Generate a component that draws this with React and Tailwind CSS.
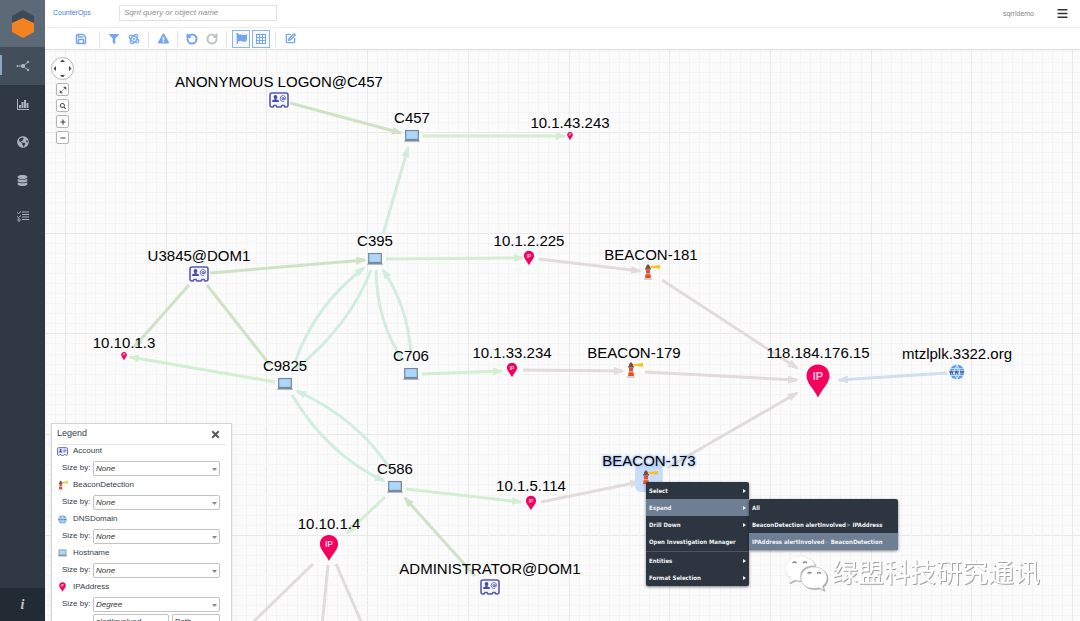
import { useState } from "react";
import { FaDatabase, FaExclamationTriangle, FaFilter, FaFlag, FaGlobeAmericas, FaMinus, FaPlus, FaSearch, FaTimes } from "react-icons/fa";
import { Menu, RotateCcw, RotateCw, Save, SquarePen } from "lucide-react";

// Node positions are icon centres on the canvas, in px
const nodes = [
  { label: "ANONYMOUS LOGON@C457", type: "account", x: 234, y: 50 },
  { label: "C457", type: "host", x: 367, y: 86 },
  { label: "10.1.43.243", type: "ip", size: "sm", x: 525, y: 86 },
  { label: "C395", type: "host", x: 330, y: 209 },
  { label: "10.1.2.225", type: "ip", size: "md", x: 484, y: 208 },
  { label: "BEACON-181", type: "beacon", x: 606, y: 222 },
  { label: "U3845@DOM1", type: "account", x: 154, y: 224 },
  { label: "10.10.1.3", type: "ip", size: "sm", x: 79, y: 306 },
  { label: "C9825", type: "host", x: 240, y: 334 },
  { label: "C706", type: "host", x: 366, y: 324 },
  { label: "10.1.33.234", type: "ip", size: "md", x: 467, y: 320 },
  { label: "BEACON-179", type: "beacon", x: 589, y: 320 },
  { label: "118.184.176.15", type: "ip", size: "xl", x: 773, y: 331 },
  { label: "mtzlplk.3322.org", type: "dns", x: 912, y: 322 },
  { label: "C586", type: "host", x: 350, y: 437 },
  { label: "10.1.5.114", type: "ip", size: "md", x: 486, y: 453 },
  { label: "BEACON-173", type: "beacon", x: 604, y: 428, selected: true },
  { label: "10.10.1.4", type: "ip", size: "lg", x: 284, y: 498 },
  { label: "ADMINISTRATOR@DOM1", type: "account", x: 445, y: 537 },
];

const labelGap = { account: 18, host: 18, beacon: 17, dns: 18, sm: 13, md: 17, lg: 24, xl: 28 };

const edges = [
  { d: "M245 53 L356 83", color: "account" },
  { d: "M377 86 L520 86", color: "ip" },
  { d: "M338 184 L363 98", color: "host" },
  { d: "M165 223 L320 210", color: "account" },
  { d: "M341 209 L478 208", color: "ip" },
  { d: "M494 209 L595 221", color: "beacon" },
  { d: "M144 235 L89 297", color: "account" },
  { d: "M162 235 L225 315", color: "account", plain: true },
  { d: "M230 332 L85 307", color: "ip" },
  { d: "M250 312 Q270 255 319 218", color: "host" },
  { d: "M326 220 Q305 275 251 319", color: "host" },
  { d: "M331 220 Q332 273 358 310", color: "host" },
  { d: "M366 305 Q363 256 338 220", color: "host" },
  { d: "M377 324 L457 321", color: "ip" },
  { d: "M478 320 L578 321", color: "beacon" },
  { d: "M600 322 L752 330", color: "beacon" },
  { d: "M617 230 L752 318", color: "beacon" },
  { d: "M902 323 L794 330", color: "dns" },
  { d: "M247 345 Q283 405 339 431", color: "host" },
  { d: "M347 422 Q315 370 252 341", color: "host" },
  { d: "M361 439 L476 452", color: "ip" },
  { d: "M496 452 L594 432", color: "beacon" },
  { d: "M622 418 L752 343", color: "beacon" },
  { d: "M340 447 L302 483", color: "ip" },
  { d: "M430 526 L360 448", color: "account" },
  { d: "M268 514 L204 576", color: "beacon", plain: true },
  { d: "M283 515 L277 576", color: "beacon", plain: true },
  { d: "M291 514 L318 576", color: "beacon", plain: true },
];

const edgeColors = {
  account: "#cfe2c6",
  host: "#d0eddf",
  ip: "#d3eed1",
  beacon: "#e1dbdb",
  dns: "#d0deee",
};

const legend = [
  { name: "Account", type: "account", value: "None" },
  { name: "BeaconDetection", type: "beacon", value: "None" },
  { name: "DNSDomain", type: "dns", value: "None" },
  { name: "Hostname", type: "host", value: "None" },
  { name: "IPAddress", type: "ip", value: "Degree" },
];

function AccountIcon({ className }) {
  return (
    <svg viewBox="0 0 20 16" className={className}>
      <path d="M3 1h14q2 0 2 2v10q0 2-2 2h-1l-1-1.500h-2L12 15H8l-1-1.500H5L4 15H3q-2 0-2-2V3q0-2 2-2z" fill="#f4f6ff" stroke="#5559b5" strokeWidth="1.600" />
      <circle cx="6.500" cy="5" r="1.900" fill="#474da8" />
      <path d="M5.600 6h1.800v1.400l2.400.8V10H3.200V8.200l2.400-.8z" fill="#474da8" />
      <circle cx="14" cy="6.700" r="1.100" fill="none" stroke="#555ab3" />
      <path d="M15.100 5.400v1.800q.3 1 1.100.3.900-2.700-.9-3.700-2.200-.8-3.700.9-1.200 2.400.6 4.200 1.400 1 3 .3" fill="none" stroke="#555ab3" strokeWidth=".8" />
    </svg>
  );
}

function HostIcon({ className }) {
  return (
    <svg viewBox="0 0 16 13" className={className}>
      <rect x="1.700" y="1" width="12.600" height="9" fill="#acd6fb" stroke="#72879b" strokeWidth="1.200" />
      <path d="M1.300 10.200h13.400l1.300 2H0z" fill="#7d8c99" />
      <path d="M0 12.200h16" stroke="#c1c7cc" strokeWidth=".8" />
    </svg>
  );
}

function BeaconIcon({ className }) {
  return (
    <svg viewBox="0 0 18 18" className={className}>
      <path d="M8 3.200l10-1.200v3.800L8 4.800z" fill="#fbc21f" />
      <path d="M4 3.200L6 1l2 2.200v2H4z" fill="#7b4b46" />
      <path d="M3 5.200h6v1.300H3z" fill="#55444b" />
      <path d="M4 6.500h4v3.500H4z" fill="#ee4d22" />
      <path d="M4 10h4v1.300H4z" fill="#c3aaa2" />
      <path d="M3.500 11.300h5l.5 4H3z" fill="#ee4d22" />
      <path d="M2 15.300h8v1.700H2z" fill="#d2d1d1" />
    </svg>
  );
}

function DnsIcon({ className }) {
  return (
    <svg viewBox="0 0 16 16" className={className}>
      <circle cx="8" cy="8" r="7.300" fill="#5b9ee8" />
      <path d="M8 1v14M1.600 4.500h12.800M1.600 11.500h12.800M8 1Q2.500 8 8 15M8 1q5.500 7 0 14" fill="none" stroke="#e5f1fd" strokeWidth=".7" />
      <rect x="0" y="6" width="16" height="4" fill="#dfebfa" />
      <path d="M.7 6.800l.9 2.400.9-2 .9 2 .9-2.400M5.900 6.800l.9 2.400.9-2 .9 2 .9-2.400M11.200 6.800l.9 2.400.9-2 .9 2 .9-2.400" fill="none" stroke="#4561ae" strokeWidth="1.100" />
    </svg>
  );
}

function PinIcon({ className }) {
  return (
    <svg viewBox="0 0 24 34" className={className}>
      <path d="M12 .5C5.500.5.500 5.500.500 12c0 7 7.500 13 11.500 21.500C16 25 23.500 19 23.500 12 23.500 5.500 18.500.5 12 .5z" fill="#f6005d" />
      <text x="12" y="16" textAnchor="middle" fontSize="11" fontFamily="Liberation Sans, sans-serif" fontWeight="bold" fill="#ffc4da">IP</text>
    </svg>
  );
}

const pinSizes = {
  sm: "w-[6px] h-[9px]",
  md: "w-[11px] h-[15px]",
  lg: "w-[19px] h-[27px]",
  xl: "w-[24px] h-[34px]",
};

function NodeIcon({ type, size }) {
  if (type === "account") return <AccountIcon className="w-5 h-4" />;
  if (type === "host") return <HostIcon className="w-4 h-[13px]" />;
  if (type === "beacon") return <BeaconIcon className="w-[18px] h-[18px]" />;
  if (type === "dns") return <DnsIcon className="w-4 h-4" />;
  return <PinIcon className={pinSizes[size]} />;
}

function LegendIcon({ type }) {
  if (type === "account") return <AccountIcon className="w-[11px] h-[9px]" />;
  if (type === "host") return <HostIcon className="w-[9px] h-[8px]" />;
  if (type === "beacon") return <BeaconIcon className="w-[11px] h-[11px]" />;
  if (type === "dns") return <DnsIcon className="w-[9px] h-[9px]" />;
  return <PinIcon className="w-[7px] h-[10px]" />;
}

function GridLines() {
  const lines = [];
  for (let i = -9; i < 240; i++) {
    const v = Math.round(i * 10.07);
    const stroke = i % 10 === 0 ? "#e8e8e9" : "#f4f4f5";
    lines.push(<path key={`v${i}`} d={`M${v + 20}.5 0V2400`} stroke={stroke} />);
    lines.push(<path key={`h${i}`} d={`M0 ${v + 82}.5H2400`} stroke={stroke} />);
  }
  return <g>{lines}</g>;
}

function Graph() {
  return (
    <>
      <svg className="absolute inset-0 w-full h-full" fill="none">
        <defs>
          {Object.entries(edgeColors).map(([name, color]) => (
            <marker key={name} id={`arrow-${name}`} viewBox="0 0 11 8" refX="9" refY="4" markerWidth="11" markerHeight="8" markerUnits="userSpaceOnUse" orient="auto">
              <path d="M0 0L11 4L0 8z" fill={color} />
            </marker>
          ))}
        </defs>
        <GridLines />
        {edges.map((e) => (
          <path key={e.d} d={e.d} stroke={edgeColors[e.color]} strokeWidth="3" markerEnd={e.plain ? undefined : `url(#arrow-${e.color})`} />
        ))}
      </svg>
      {nodes.map((n) => (
        <div key={n.label}>
          <div
            className={`absolute -translate-x-1/2 -translate-y-1/2 flex items-center justify-center ${n.selected ? "w-7 h-7 rounded-md bg-[#c8dcfb]" : ""}`}
            style={{ left: n.x, top: n.y }}
          >
            <NodeIcon type={n.type} size={n.size} />
          </div>
          <span
            className={`absolute -translate-x-1/2 -translate-y-1/2 whitespace-nowrap text-[15px] leading-[18px] text-black ${n.selected ? "[text-shadow:0_0_3px_#8fb5f5,0_0_3px_#8fb5f5]" : ""}`}
            style={{ left: n.x, top: n.y - labelGap[n.size || n.type] }}
          >
            {n.label}
          </span>
        </div>
      ))}
    </>
  );
}

function Sidebar() {
  const item = "h-[38px] w-full flex items-center justify-center text-[#aab2ba]";
  return (
    <aside className="w-[45px] shrink-0 flex flex-col bg-[#2f3843]">
      <div className="h-[47px] flex items-center justify-center bg-[#5c6977]">
        <svg viewBox="0 0 24 28" className="w-6 h-7">
          <path d="M12 0l11 6v12l-11 6L1 18V6z" fill="#3d4a57" />
          <path d="M12 8l11 5v9l-11 6L1 22v-9z" fill="#f58220" />
        </svg>
      </div>
      <button aria-label="Graph" className={`${item} relative bg-[#434e5b]`}>
        <span className="absolute left-0 top-2 w-[2px] h-5 bg-[#8ea6c5]" />
        <svg viewBox="0 0 14 12" className="w-[14px] h-3" fill="currentColor" stroke="currentColor">
          <path d="M1 6h6l5-4M7 6l5 4" fill="none" strokeWidth="1" />
          <circle cx="7" cy="6" r="1.700" />
          <circle cx="12" cy="2" r=".8" />
          <circle cx="12" cy="10" r=".8" />
          <circle cx="1.300" cy="6" r=".5" />
        </svg>
      </button>
      <button aria-label="Charts" className={item}>
        <svg viewBox="0 0 12 11" className="w-3 h-[11px]" fill="currentColor">
          <path d="M0 0h1v10h11v1H0zM2 6h2v3H2zM4.500 3h2v6h-2zM7 1h2v8H7zM9.500 4h2v5h-2z" />
        </svg>
      </button>
      <button aria-label="Geography" className={item}><FaGlobeAmericas size={12} /></button>
      <button aria-label="Data" className={item}><FaDatabase size={11} /></button>
      <button aria-label="Tasks" className="h-[34px] w-full flex items-center justify-center text-[#aab2ba]">
        <svg viewBox="0 0 12 11" className="w-3 h-[11px]" fill="none" stroke="currentColor">
          <path d="M5 1h7M5 3.500h7M5 6h7M5 8.500h7" />
          <path d="M0 1.500l1.500 1L4 .5M0 5.500l1.500 1L4 4.500" />
          <circle cx="2" cy="9" r="1.200" />
        </svg>
      </button>
      <button aria-label="Info" className="mt-auto h-[33px] flex items-center justify-center bg-[#222a33] text-[#c0c6cc]">
        <span className="font-['Liberation_Serif',serif] font-bold italic text-[14px]">i</span>
      </button>
    </aside>
  );
}

function Divider() {
  return <span className="mx-1 w-px h-4 bg-[#e0e4ea]" />;
}

function Toolbar() {
  const btn = "w-5 h-[18px] flex items-center justify-center";
  const boxed = "mx-[1px] w-[18px] h-[18px] flex items-center justify-center border border-[#8fb4f0] bg-[#f4f8ff]";
  return (
    <div className="h-[22px] pl-[26px] flex items-center bg-white border-b border-[#dcdcdc] text-[#76a4ee]">
      <button aria-label="Save" className={`${btn} mr-1`}><Save size={12} strokeWidth={3} /></button>
      <Divider />
      <button aria-label="Filter" className={btn}><FaFilter size={10} /></button>
      <button aria-label="Layout" className={btn}>
        <svg viewBox="0 0 12 12" className="w-3 h-3" fill="none" stroke="currentColor">
          <ellipse cx="6" cy="6" rx="5.500" ry="2.500" transform="rotate(35 6 6)" />
          <ellipse cx="6" cy="6" rx="5.500" ry="2.500" transform="rotate(-55 6 6)" />
          <circle cx="6" cy="6" r="3.500" />
          <circle cx="6" cy="6" r="1" />
        </svg>
      </button>
      <Divider />
      <button aria-label="Alerts" className={btn}><FaExclamationTriangle size={11} /></button>
      <Divider />
      <button aria-label="Undo" className={btn}><RotateCcw size={12} strokeWidth={4} /></button>
      <button aria-label="Redo" className={`${btn} text-[#bfc2c6]`}><RotateCw size={12} strokeWidth={4} /></button>
      <Divider />
      <button aria-label="Flags" className={boxed}><FaFlag size={11} /></button>
      <button aria-label="Grid" className={boxed}>
        <svg viewBox="0 0 12 12" className="w-3 h-3" stroke="currentColor" fill="none">
          <path d="M1.500 1v10M4.500 1v10M7.500 1v10M10.500 1v10M1 1.500h10M1 4.500h10M1 7.500h10M1 10.500h10" />
        </svg>
      </button>
      <Divider />
      <button aria-label="Edit" className={btn}><SquarePen size={11} strokeWidth={3} /></button>
    </div>
  );
}

function Header() {
  return (
    <header className="h-7 px-2 flex items-center bg-white border-b border-[#ececec]">
      <a href="#" className="w-[66px] pb-[2px] text-[7px] leading-[10px] text-[#3f80cf]">CounterOps</a>
      <input
        aria-label="Search"
        placeholder="Sqrrl query or object name"
        className="w-[158px] h-4 mb-[2px] px-1 border border-[#e2e2e2] text-[8px] italic placeholder:text-[#8d8d8d]"
      />
      <span className="ml-auto text-[7px] leading-[10px] text-[#858585]">sqrrldemo</span>
      <button aria-label="Menu" className="ml-[22px] mr-[3px] text-[#333]"><Menu size={13} strokeWidth={3} /></button>
    </header>
  );
}

function MapControls() {
  const btn = "w-[13px] h-[13px] flex items-center justify-center rounded-[2px] border border-[#b5b5b5] bg-white text-[#444]";
  return (
    <div className="absolute left-[6px] top-[7px] w-[23px] flex flex-col items-center gap-[3px]">
      <button aria-label="Pan" className="w-[23px] h-[23px] rounded-full border border-[#b9b9b9] bg-white">
        <svg viewBox="0 0 21 21" className="w-full h-full" fill="#444">
          <path d="M10.500 1.500l2.500 2.500h-5zM10.500 19.500l2.500-2.500h-5zM1.500 10.500l2.500-2.500v5zM19.500 10.500l-2.500-2.500v5z" />
        </svg>
      </button>
      <button aria-label="Fit" className={btn}>
        <svg viewBox="0 0 8 8" className="w-2 h-2" fill="#555" stroke="#555">
          <path d="M4.500 1h2.500v2.500zM1 4.500v2.500h2.500zM2 6l4-4" strokeWidth=".5" />
        </svg>
      </button>
      <button aria-label="Search area" className={btn}><FaSearch size={6} /></button>
      <button aria-label="Zoom in" className={btn}><FaPlus size={6} /></button>
      <button aria-label="Zoom out" className={btn}><FaMinus size={6} /></button>
    </div>
  );
}

function Select({ id, label, options, className }) {
  return (
    <span className={`relative flex ${className}`}>
      <select id={id} aria-label={label} className="w-full h-[15px] pl-[2px] appearance-none rounded-[2px] border border-[#c3c3c3] bg-white text-[8px] leading-[13px] text-[#333]">
        {options.map((o) => <option key={o}>{o}</option>)}
      </select>
      <svg viewBox="0 0 5 3" className="absolute right-[3px] top-[7px] w-[5px] h-[3px] pointer-events-none" fill="#888">
        <path d="M0 0h5L2.500 3z" />
      </svg>
    </span>
  );
}

function Legend({ onClose }) {
  return (
    <section className="absolute left-[6px] top-[373px] w-[181px] px-[5px] pb-2 border border-[#d5d5d5] bg-white text-[8px] text-[#333c48] shadow-sm">
      <div className="h-[21px] flex items-center justify-between border-b border-[#e4e4e4]">
        <h2 className="text-[9px]">Legend</h2>
        <button aria-label="Close legend" onClick={onClose} className="mr-[5px] text-[#555]"><FaTimes size={11} /></button>
      </div>
      {legend.map((row) => (
        <div key={row.name}>
          <div className="h-[17px] pb-[5px] flex items-center">
            <span className="w-[11px] mr-[5px] flex justify-center"><LegendIcon type={row.type} /></span>
            {row.name}
          </div>
          <div className="h-[17px] pb-[5px] flex items-center">
            <label htmlFor={row.name} className="w-9 pl-[5px] whitespace-nowrap">Size by:</label>
            <Select id={row.name} options={[row.value]} className="w-[127px] italic" />
          </div>
        </div>
      ))}
      <div className="h-[17px] pl-9 pb-[5px] flex items-center gap-[3px]">
        <Select label="Relationship" options={["alertInvolved"]} className="w-[76px]" />
        <Select label="Direction" options={["Both"]} className="w-[48px]" />
      </div>
    </section>
  );
}

function MenuItem({ children, arrow, active }) {
  return (
    <button className={`w-full h-[17px] px-[3px] flex items-center justify-between whitespace-nowrap ${active ? "bg-[#6e7f93]" : ""}`}>
      <span>{children}</span>
      {arrow && <svg viewBox="0 0 3 4" className="w-[3px] h-1" fill="currentColor"><path d="M0 0l3 2-3 2z" /></svg>}
    </button>
  );
}

function ContextMenu() {
  const panel = "overflow-hidden rounded-[2px] bg-[#2d3640] shadow-[0_1px_3px_rgba(0,0,0,0.5)]";
  return (
    <div className="absolute left-[601px] top-[432px] flex items-start font-['DejaVu_Sans_Condensed','DejaVu_Sans',sans-serif] font-bold text-[6px] leading-[8px] text-[#f0f2f4]">
      <div className={`w-[103px] ${panel}`}>
        <MenuItem arrow>Select</MenuItem>
        <MenuItem arrow active>Expand</MenuItem>
        <MenuItem arrow>Drill Down</MenuItem>
        <MenuItem>Open Investigation Manager</MenuItem>
        <div className="mt-px border-t border-[#4a5561]" />
        <MenuItem arrow>Entities</MenuItem>
        <MenuItem arrow>Format Selection</MenuItem>
      </div>
      <div className={`mt-[17px] w-[149px] ${panel}`}>
        <MenuItem>All</MenuItem>
        <MenuItem>BeaconDetection alertInvolved<span className="text-[#8a96a4]">&gt;</span> IPAddress</MenuItem>
        <MenuItem active>IPAddress alertInvolved<span className="text-[#8a96a4]">&gt;</span> BeaconDetection</MenuItem>
      </div>
    </div>
  );
}

function Watermark() {
  return (
    <div className="absolute left-[739px] top-[504px] flex items-center gap-1 drop-shadow-[1px_1px_0_#a5a5a5]">
      <svg viewBox="0 0 44 36" className="w-11 h-9" fill="#fff">
        <path d="M16 1C7 1 1 7 1 13.500c0 4 2 7 5.500 9.500L5 28l6-3q3 .8 6 .6C14 16 21 10 31 10.500 29 4 23 1 16 1z" stroke="#dcdcdc" strokeWidth=".5" />
        <path d="M30 12c-8 0-13 5-13 11s5 10.500 13 10.500q3 0 5-.7l5 2.700-1.400-4.500c3-2 4.400-5 4.400-8 0-6-5-11-13-11z" stroke="#bbb" strokeWidth=".6" />
        <path d="M8.500 8q2-2 4 0M19 8q2-2 4 0M23.500 18.500q2-2 4 0M33 18.500q2-2 4 0" fill="none" stroke="#888" strokeWidth="1.200" />
      </svg>
      <span className="whitespace-nowrap font-['Liberation_Sans','Noto_Sans_CJK_SC',sans-serif] text-[26px] leading-[38px] text-white">绿盟科技研究通讯</span>
    </div>
  );
}

function App() {
  const [showLegend, setShowLegend] = useState(true);

  return (
    <div className="h-screen flex font-['Liberation_Sans',Arial,sans-serif]">
      <Sidebar />
      <div className="flex-1 min-w-0 flex flex-col">
        <Header />
        <Toolbar />
        <main className="relative flex-1 overflow-hidden bg-[#fbfbfb]">
          <Graph />
          <MapControls />
          {showLegend && <Legend onClose={() => setShowLegend(false)} />}
          <ContextMenu />
          <Watermark />
        </main>
      </div>
    </div>
  );
}

export default App;
